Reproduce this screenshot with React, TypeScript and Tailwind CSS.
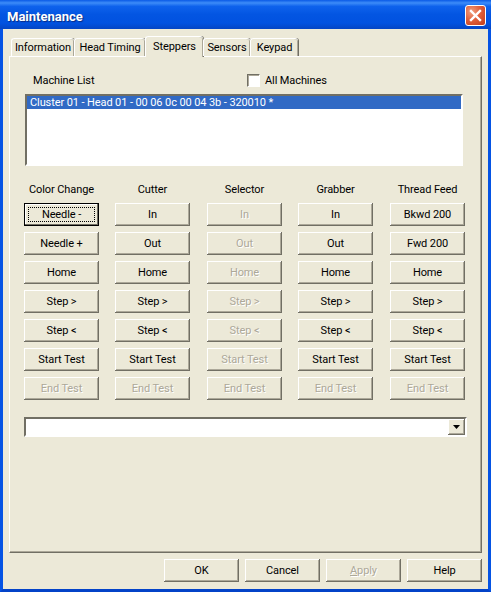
import React from 'react';

type BtnProps = {
  label: React.ReactNode;
  disabled?: boolean;
  focused?: boolean;
};

const raised = 'shadow-[inset_-1px_-1px_0_#716f64,inset_1px_1px_0_#ffffff,inset_-2px_-2px_0_#aca899]';

const Btn = ({ label, disabled, focused }: BtnProps) => {
  return (
    <div
      className={`relative flex h-[23px] w-[75px] items-center justify-center bg-[#ece9d8] ${
        focused
          ? 'border border-black shadow-[inset_-1px_-1px_0_#716f64,inset_1px_1px_0_#ffffff]'
          : raised
      } ${disabled ? 'text-[#aca899] [text-shadow:1px_1px_0_#ffffff]' : 'text-black'}`}
    >
      {focused && <div className="absolute inset-[3px] border border-dotted border-black" />}
      <span className="relative">{label}</span>
    </div>
  );
};

type ColumnProps = {
  title: string;
  rows: string[];
  allDisabled?: boolean;
  className?: string;
  focusFirst?: boolean;
};

const Column = ({ title, rows, allDisabled, className, focusFirst }: ColumnProps) => (
  <div className={`flex w-[75px] flex-col ${className ?? ''}`}>
    <div className="mb-[6px] flex h-[16px] items-center justify-center whitespace-nowrap">{title}</div>
    <div className="flex flex-col gap-[6px]">
      {rows.map((row, i) => (
        <Btn
          key={row}
          label={row}
          focused={focusFirst && i === 0}
          disabled={allDisabled || row === 'End Test'}
        />
      ))}
    </div>
  </div>
);

const tabs = [
  { name: 'Information', width: 'w-[63px]' },
  { name: 'Head Timing', width: 'w-[71px]' },
  { name: 'Steppers', width: 'w-[58px]', active: true },
  { name: 'Sensors', width: 'w-[47px]' },
  { name: 'Keypad', width: 'w-[48px]' },
];

const common = ['Home', 'Step >', 'Step <', 'Start Test', 'End Test'];

export default function App() {
  return (
    <div className="flex h-[592px] w-[491px] flex-col overflow-hidden bg-[#ece9d8] font-['Roboto',sans-serif] text-[11px] leading-none tracking-[-0.1px] text-black">
      {/* Title bar */}
      <div className="flex h-[29px] shrink-0 items-center justify-between bg-[linear-gradient(180deg,#0a5ae6_0%,#3d8cf8_10%,#0e62ec_22%,#0355e2_50%,#0152e0_80%,#0445c4_100%)] pl-[7px] pr-[5px]">
        <span className="pt-[4px] text-[13px] font-bold tracking-normal text-white [text-shadow:1px_1px_1px_#0a2a80]">Maintenance</span>
        <div className="mt-[2px] flex h-[21px] w-[21px] items-center justify-center rounded-[3px] border border-white bg-[radial-gradient(circle_at_30%_30%,#f0a080_0%,#e0603c_45%,#c03a18_100%)]">
          <svg width="13" height="13" viewBox="0 0 13 13">
            <path d="M2 2 L11 11 M11 2 L2 11" stroke="#ffffff" strokeWidth="2.4" strokeLinecap="square" />
          </svg>
        </div>
      </div>

      {/* Dialog body */}
      <div className="flex min-h-0 flex-1 flex-col border-x-[3px] border-b-[3px] border-x-[#0553e4] border-b-[#0343c8] pl-[6px] pr-[6px] pt-[7px]">
        {/* Tabs */}
        <div className="relative z-10 -mb-px flex h-[21px] shrink-0 items-end pl-[2px]">
          {tabs.map((tab) => (
            <div
              key={tab.name}
              className={`flex items-center justify-center rounded-t-[3px] border-l border-t border-l-white border-t-white bg-[#ece9d8] shadow-[inset_-1px_0_0_#aca899,1px_0_0_#716f64] ${tab.width} ${
                tab.active ? 'h-[21px] pb-[2px]' : 'mb-[1px] h-[18px]'
              }`}
            >
              {tab.name}
            </div>
          ))}
        </div>

        {/* Panel */}
        <div className="flex min-h-0 flex-1 flex-col border border-b-[#716f64] border-l-white border-r-[#716f64] border-t-white pl-[14px] pt-[17px] shadow-[inset_-1px_-1px_0_#aca899]">
          <div className="flex h-[13px] items-center">
            <span className="ml-[9px] w-[214px]">Machine List</span>
            <div className="h-[13px] w-[13px] border border-b-white border-l-[#716f64] border-r-white border-t-[#716f64] bg-white shadow-[inset_1px_1px_0_#aca899]" />
            <span className="ml-[5px]">All Machines</span>
          </div>

          {/* List box */}
          <div className="ml-px mt-[7px] h-[72px] w-[438px] border-2 border-b-white border-l-[#716f64] border-r-white border-t-[#716f64] bg-white">
            <div className="flex h-[13px] items-center whitespace-nowrap bg-[#316ac5] pl-[3px] text-white">
              Cluster 01 - Head 01 - 00 06 0c 00 04 3b - 320010 *
            </div>
          </div>

          {/* Stepper columns */}
          <div className="mt-[15px] flex">
            <Column title="Color Change" rows={['Needle -', 'Needle +', ...common]} focusFirst />
            <Column title="Cutter" rows={['In', 'Out', ...common]} className="ml-[16px]" />
            <Column title="Selector" rows={['In', 'Out', ...common]} allDisabled className="ml-[17px]" />
            <Column title="Grabber" rows={['In', 'Out', ...common]} className="ml-[16px]" />
            <Column title="Thread Feed" rows={['Bkwd 200', 'Fwd 200', ...common]} className="ml-[17px]" />
          </div>

          {/* Combo box */}
          <div className="mt-[17px] flex h-[20px] w-[443px] items-center justify-end border-2 border-b-white border-l-[#716f64] border-r-white border-t-[#716f64] bg-white">
            <div className={`flex h-[16px] w-[17px] items-center justify-center bg-[#ece9d8] ${raised}`}>
              <svg width="7" height="4" viewBox="0 0 7 4">
                <path d="M0 0 H7 L3.5 4 Z" fill="#000000" />
              </svg>
            </div>
          </div>
        </div>

        {/* Footer */}
        <div className="mb-[7px] mt-[6px] flex shrink-0 justify-end gap-[6px]">
          <Btn label="OK" />
          <Btn label="Cancel" />
          <Btn label={<><span className="underline">A</span>pply</>} disabled />
          <Btn label="Help" />
        </div>
      </div>
    </div>
  );
}
